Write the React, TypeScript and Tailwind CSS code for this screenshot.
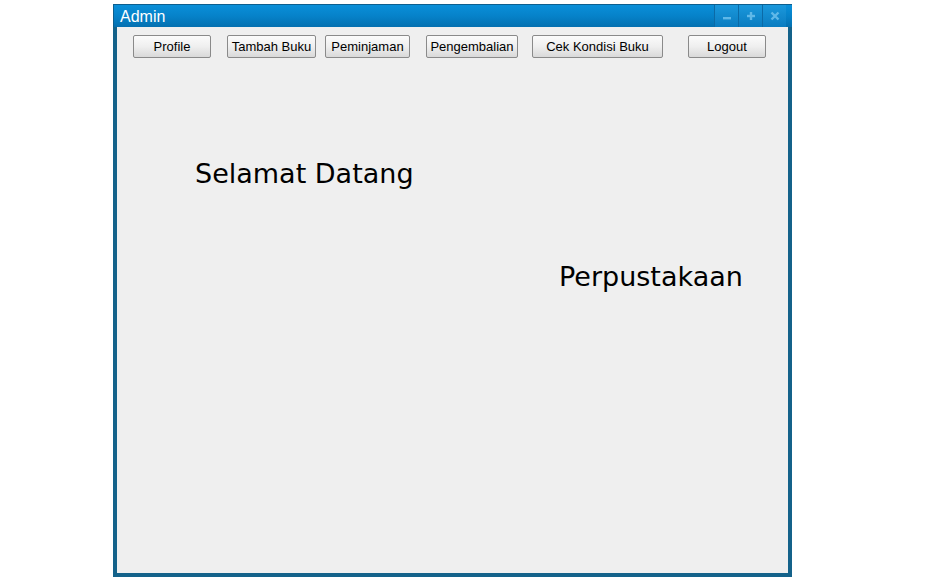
import React from 'react';

const menu: { label: string; width: string; gap: string }[] = [
  { label: 'Profile', width: 'w-[78px]', gap: 'ml-[16px]' },
  { label: 'Tambah Buku', width: 'w-[89px]', gap: 'ml-[16px]' },
  { label: 'Peminjaman', width: 'w-[85px]', gap: 'ml-[9px]' },
  { label: 'Pengembalian', width: 'w-[92px]', gap: 'ml-[16px]' },
  { label: 'Cek Kondisi Buku', width: 'w-[131px]', gap: 'ml-[14px]' },
  { label: 'Logout', width: 'w-[78px]', gap: 'ml-[25px]' },
];

const TitleButton: React.FC<{ children: React.ReactNode }> = ({ children }) => (
  <div className="w-[24px] h-[22px] flex items-center justify-center bg-gradient-to-b from-[#1a98dc] to-[#0a7cc0] border-l border-[#0b6aa6]">
    {children}
  </div>
);

export default function App() {
  return (
    <div className="w-[945px] h-[579px] bg-white overflow-hidden pt-[4px] pl-[113px]">
      {/* Window frame */}
      <div className="w-[679px] h-[573px] flex flex-col bg-[#14628a] px-[4px] pb-[4px]">
        {/* Title bar */}
        <div className="h-[23px] -mx-[4px] flex items-stretch bg-gradient-to-b from-[#0a8fd9] via-[#0682c9] to-[#0470b0] border-t border-l border-[#0d5f8f]">
          <div className="flex-1 pl-[6px] pt-[2px] text-white text-[16px] leading-[19px]" style={{ fontFamily: '"Liberation Sans", Arial, sans-serif' }}>
            Admin
          </div>
          <div className="flex pr-[6px]">
            <TitleButton>
              <svg width="10" height="10" viewBox="0 0 10 10">
                <rect x="1" y="6" width="8" height="2.4" fill="#5fb8e8" />
              </svg>
            </TitleButton>
            <TitleButton>
              <svg width="10" height="10" viewBox="0 0 10 10">
                <rect x="1" y="3.8" width="8" height="2.4" fill="#5fb8e8" />
                <rect x="3.8" y="1" width="2.4" height="8" fill="#5fb8e8" />
              </svg>
            </TitleButton>
            <TitleButton>
              <svg width="10" height="10" viewBox="0 0 10 10">
                <path d="M1.5 1.5 L8.5 8.5 M8.5 1.5 L1.5 8.5" stroke="#5fb8e8" strokeWidth="2.4" />
              </svg>
            </TitleButton>
          </div>
        </div>

        {/* Content */}
        <div className="flex-1 bg-[#efefef] pt-[8px]" style={{ fontFamily: '"Liberation Sans", Arial, sans-serif' }}>
          <div className="flex">
            {menu.map(m => (
              <button
                key={m.label}
                className={`${m.width} ${m.gap} h-[23px] flex items-center justify-center rounded-[2px] border border-[#8a8a8a] bg-gradient-to-b from-[#fbfbfb] via-[#efefef] to-[#d9d9d9] text-[13px] text-black whitespace-nowrap`}
              >
                {m.label}
              </button>
            ))}
          </div>

          <div
            className="mt-[98px] ml-[78px] text-[27px] leading-[36px] text-black"
            style={{ fontFamily: '"Comic Sans MS", "DejaVu Sans", sans-serif' }}
          >
            Selamat Datang
          </div>

          <div
            className="mt-[67px] ml-[442px] text-[27px] leading-[36px] text-black"
            style={{ fontFamily: '"Comic Sans MS", "DejaVu Sans", sans-serif' }}
          >
            Perpustakaan
          </div>
        </div>
      </div>
    </div>
  );
}
